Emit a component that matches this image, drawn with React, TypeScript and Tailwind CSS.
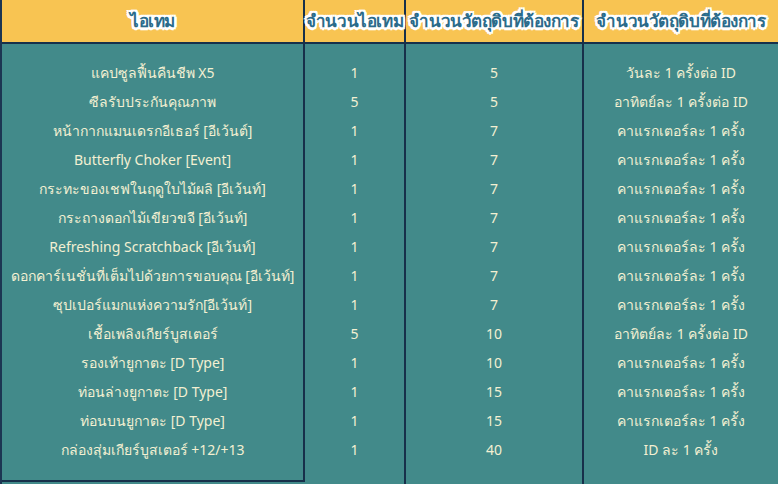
const ROWS = [
  ["แคปซูลฟื้นคืนชีพ X5", "1", "5", "วันละ 1 ครั้งต่อ ID"],
  ["ซีลรับประกันคุณภาพ", "5", "5", "อาทิตย์ละ 1 ครั้งต่อ ID"],
  ["หน้ากากแมนเดรกอีเธอร์ [อีเว้นต์]", "1", "7", "คาแรกเตอร์ละ 1 ครั้ง"],
  ["Butterfly Choker [Event]", "1", "7", "คาแรกเตอร์ละ 1 ครั้ง"],
  ["กระทะของเชฟในฤดูใบไม้ผลิ [อีเว้นท์]", "1", "7", "คาแรกเตอร์ละ 1 ครั้ง"],
  ["กระถางดอกไม้เขียวขจี [อีเว้นท์]", "1", "7", "คาแรกเตอร์ละ 1 ครั้ง"],
  ["Refreshing Scratchback [อีเว้นท์]", "1", "7", "คาแรกเตอร์ละ 1 ครั้ง"],
  ["ดอกคาร์เนชั่นที่เต็มไปด้วยการขอบคุณ [อีเว้นท์]", "1", "7", "คาแรกเตอร์ละ 1 ครั้ง"],
  ["ซุปเปอร์แมกแห่งความรัก[อีเว้นท์]", "1", "7", "คาแรกเตอร์ละ 1 ครั้ง"],
  ["เชื้อเพลิงเกียร์บูสเตอร์", "5", "10", "อาทิตย์ละ 1 ครั้งต่อ ID"],
  ["รองเท้ายูกาตะ [D Type]", "1", "10", "คาแรกเตอร์ละ 1 ครั้ง"],
  ["ท่อนล่างยูกาตะ [D Type]", "1", "15", "คาแรกเตอร์ละ 1 ครั้ง"],
  ["ท่อนบนยูกาตะ [D Type]", "1", "15", "คาแรกเตอร์ละ 1 ครั้ง"],
  ["กล่องสุ่มเกียร์บูสเตอร์ +12/+13", "1", "40", "ID ละ 1 ครั้ง"],
];

const HEADERS = ["ไอเทม", "จำนวนไอเทม", "จำนวนวัตถุดิบที่ต้องการ", "จำนวนวัตถุดิบที่ต้องการ"];

// white outline round the header words
const outline =
  "[text-shadow:2.5px_0_0_#fff,-2.5px_0_0_#fff,0_2.5px_0_#fff,0_-2.5px_0_#fff,2px_2px_0_#fff,-2px_-2px_0_#fff,2px_-2px_0_#fff,-2px_2px_0_#fff,0_0_3px_#fff]";

export default function App() {
  return (
    <div className="w-[778px] h-[484px] overflow-hidden bg-[#1c3552] pl-[2px] font-['Noto_Sans',sans-serif]">
      <div className="grid grid-cols-[303px_101px_178px_1fr] bg-[#f8c452]">
        {HEADERS.map((h, i) => (
          <div
            key={i}
            className={`h-[44px] flex items-center justify-center border-b-2 border-[#17304a] whitespace-nowrap text-[17px] font-bold text-[#2b6b8a] tracking-tight ${outline} ${
              i < 3 ? "border-r-2" : ""
            }`}
          >
            {h}
          </div>
        ))}
      </div>
      <div className="grid grid-cols-[303px_101px_178px_1fr] bg-[#428a8a] h-[460px] text-[14px] text-[#f3f0d2]">
        {[0, 1, 2, 3].map((c) => (
          <div
            key={c}
            className={`flex flex-col pt-[14px] ${c < 3 ? "border-r-2 border-[#17304a]" : ""} ${
              c === 0 ? "h-[438px] border-b-2" : ""
            }`}
          >
            {ROWS.map((r, i) => (
              <div key={i} className="h-[29px] flex items-center justify-center whitespace-nowrap">
                {r[c]}
              </div>
            ))}
          </div>
        ))}
      </div>
    </div>
  );
}
